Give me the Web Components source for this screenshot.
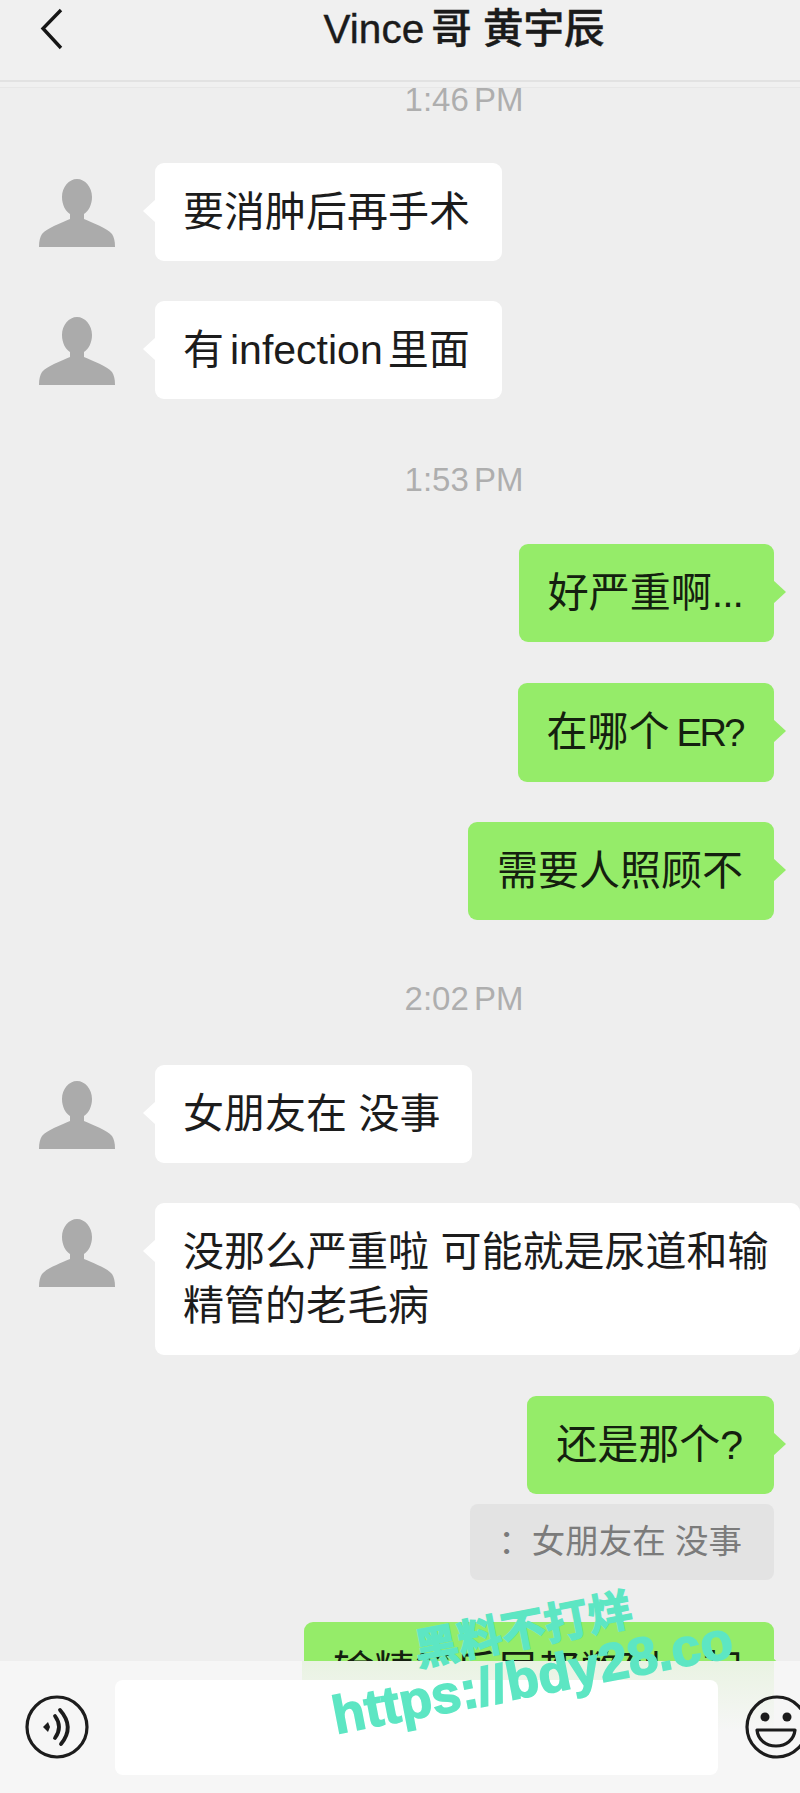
<!DOCTYPE html>
<html lang="zh">
<head>
<meta charset="utf-8">
<title>Vince 哥 黄宇辰</title>
<style>
    html, body {
        margin: 0;
        padding: 0;
    }

    body {
        position: relative;
        display: flex;
        flex-direction: column;
        width: 800px;
        height: 1793px;
        overflow: hidden;
        background: #eeeeee;
        font-family: "Liberation Sans", "Noto Sans CJK SC", sans-serif;
    }

    #chat {
        flex: 1;
        min-height: 0;
        overflow: hidden;
        background: linear-gradient(#f0f0f0 0 5px, #e7e7e7 5px 6px, #eeeeee 6px);
    }

    .narrow {
        font-size: 38px;
        letter-spacing: -2.5px;
        margin-left: 7px;
    }

    .dots {
        letter-spacing: -1px;
    }

    .latin {
        margin: 0 5px 0 6px;
    }
</style>
</head>
<body>
<chat-header>Vince<span style="margin-left:7px">哥</span> 黄宇辰</chat-header>

<main id="chat">
    <chat-time>1:46 PM</chat-time>
    <chat-bubble style="margin-top:45px">要消肿后再手术</chat-bubble>
    <chat-bubble style="margin-top:40px">有<span class="latin">infection</span>里面</chat-bubble>

    <chat-time style="margin-top:63px">1:53 PM</chat-time>
    <chat-bubble side="right" style="margin-top:46px">好严重啊<span class="dots">...</span></chat-bubble>
    <chat-bubble side="right" style="margin-top:41px">在哪个<span class="narrow">ER?</span></chat-bubble>
    <chat-bubble side="right" style="margin-top:40px">需要人照顾不</chat-bubble>

    <chat-time style="margin-top:61px">2:02 PM</chat-time>
    <chat-bubble style="margin-top:48px">女朋友在 没事</chat-bubble>
    <chat-bubble style="margin-top:40px">没那么严重啦 可能就是尿道和输<br>精管的老毛病</chat-bubble>

    <chat-bubble side="right" style="margin-top:41px">还是那个?</chat-bubble>
    <quote-bubble style="margin-top:10px">：女朋友在 没事</quote-bubble>
    <chat-bubble side="right" style="margin-top:42px">输精管后尿都憋到一起</chat-bubble>
</main>

<chat-input></chat-input>
<water-mark></water-mark>

<script>
const headerTemplate = document.createElement('template')
headerTemplate.innerHTML = `
    <style>
        :host {
            display: block;
            flex: none;
            height: 82px;
            overflow: hidden;
            background: #f0f0f0;
        }

        .bar {
            display: flex;
            align-items: center;
            height: 58px;
            padding-left: 40px;
            padding-bottom: 22px;
            border-bottom: 2px solid #e2e2e2;
        }

        svg {
            flex: none;
            display: block;
        }

        .title {
            flex: none;
            width: 800px;
            text-align: center;
            font-size: 40.500px;
            font-weight: 500;
            line-height: 58px;
            color: #1b1b1b;
            white-space: nowrap;
            -webkit-text-stroke: 0.4px #1b1b1b;
        }
    </style>
    <div class="bar">
        <svg width="24" height="44" viewBox="0 0 24 44">
            <path d="M21 3 L3 21.5 L21 41" fill="none" stroke="#161616" stroke-width="3.4"/>
        </svg>
        <div class="title"><slot></slot></div>
    </div>
`
class ChatHeader extends HTMLElement {
    constructor() {
        super();
        this.attachShadow({mode: 'open'})
        this.shadowRoot.appendChild(headerTemplate.content.cloneNode(true))
    }
}
window.customElements.define('chat-header', ChatHeader);

const timeTemplate = document.createElement('template')
timeTemplate.innerHTML = `
    <style>
        :host {
            display: block;
            padding-left: 128px;
            text-align: center;
            font-size: 33px;
            line-height: 36px;
            word-spacing: -4px;
            color: #aeaeae;
        }
    </style>
    <slot></slot>
`
class ChatTime extends HTMLElement {
    constructor() {
        super();
        this.attachShadow({mode: 'open'})
        this.shadowRoot.appendChild(timeTemplate.content.cloneNode(true))
    }
}
window.customElements.define('chat-time', ChatTime);

const avatarTemplate = document.createElement('template')
avatarTemplate.innerHTML = `
    <style>
        :host {
            display: block;
            flex: none;
            width: 76px;
            height: 68px;
            margin-top: 16px;
        }

        svg {
            display: block;
        }
    </style>
    <svg width="76" height="68" viewBox="0 0 76 68">
        <path fill="#ababab" d="M38 0 C46 0 53 8 53 18 C53 26 49.500 32 45 35 L45 40 C54 44 68 49 73 55 C75 58 76 62 76 68 L0 68 C0 62 1 58 3 55 C8 49 22 44 31 40 L31 35 C26.500 32 23 26 23 18 C23 8 30 0 38 0 Z"/>
    </svg>
`
class UserAvatar extends HTMLElement {
    constructor() {
        super();
        this.attachShadow({mode: 'open'})
        this.shadowRoot.appendChild(avatarTemplate.content.cloneNode(true))
    }
}
window.customElements.define('user-avatar', UserAvatar);

const bubbleTemplate = document.createElement('template')
bubbleTemplate.innerHTML = `
    <style>
        :host {
            display: flex;
            align-items: flex-start;
            padding-left: 39px;
        }

        :host([side="right"]) {
            justify-content: flex-end;
            padding-left: 0;
            padding-right: 26px;
        }

        .bubble {
            position: relative;
            flex: none;
            margin-left: 40px;
            padding: 22px 32px 22px 28px;
            border-radius: 9px;
            background: #ffffff;
            font-size: 41px;
            line-height: 54px;
            color: #1c1c1c;
            white-space: nowrap;
        }

        .bubble::before {
            content: '';
            position: absolute;
            top: 36px;
            left: -12px;
            width: 13px;
            height: 24px;
            background: inherit;
            clip-path: polygon(100% 0, 0 50%, 100% 100%);
        }

        :host([side="right"]) .bubble {
            margin-left: 0;
            padding: 22px 31px 22px 29px;
            background: #95ec69;
            color: #14200f;
        }

        :host([side="right"]) .bubble::before {
            left: auto;
            right: -12px;
            clip-path: polygon(0 0, 100% 50%, 0 100%);
        }

        :host([side="right"]) user-avatar {
            display: none;
        }
    </style>
    <user-avatar></user-avatar>
    <div class="bubble"><slot></slot></div>
`
class ChatBubble extends HTMLElement {
    constructor() {
        super();
        this.attachShadow({mode: 'open'})
        this.shadowRoot.appendChild(bubbleTemplate.content.cloneNode(true))
    }
}
window.customElements.define('chat-bubble', ChatBubble);

const quoteTemplate = document.createElement('template')
quoteTemplate.innerHTML = `
    <style>
        :host {
            display: flex;
            justify-content: flex-end;
            padding-right: 26px;
        }

        .quote {
            padding: 15px 32px 15px 28px;
            border-radius: 8px;
            background: #e3e3e3;
            font-size: 33.500px;
            line-height: 46px;
            color: #7b7b7b;
            white-space: nowrap;
        }
    </style>
    <div class="quote"><slot></slot></div>
`
class QuoteBubble extends HTMLElement {
    constructor() {
        super();
        this.attachShadow({mode: 'open'})
        this.shadowRoot.appendChild(quoteTemplate.content.cloneNode(true))
    }
}
window.customElements.define('quote-bubble', QuoteBubble);

const inputTemplate = document.createElement('template')
inputTemplate.innerHTML = `
    <style>
        :host {
            display: flex;
            flex: none;
            align-items: flex-start;
            box-sizing: border-box;
            height: 132px;
            padding: 19px 0 0 24px;
            overflow: hidden;
            background:
                linear-gradient(to bottom, #e9f3e2, rgba(246, 246, 246, 0) 70px) 302px 0 / 472px 100% no-repeat,
                #f6f6f6;
        }

        svg {
            flex: none;
            display: block;
            margin-top: 14px;
        }

        .field {
            flex: none;
            width: 603px;
            height: 95px;
            margin: 0 26px 0 25px;
            border-radius: 8px;
            background: #ffffff;
        }
    </style>
    <svg width="66" height="66" viewBox="0 0 66 66">
        <circle cx="33" cy="33" r="30" fill="none" stroke="#1c1c1c" stroke-width="3.2"/>
        <path d="M19 33 L24 28 L26 33 L24 38 Z" fill="#1c1c1c"/>
        <path d="M31 22 Q39 33 31 44" fill="none" stroke="#1c1c1c" stroke-width="3.8" stroke-linecap="round"/>
        <path d="M36 16 Q51 33 37 50" fill="none" stroke="#1c1c1c" stroke-width="3.8" stroke-linecap="round"/>
    </svg>
    <div class="field"></div>
    <svg width="66" height="66" viewBox="0 0 66 66">
        <circle cx="33" cy="33" r="30" fill="none" stroke="#1c1c1c" stroke-width="3.2"/>
        <circle cx="21" cy="23" r="4.500" fill="#1c1c1c"/>
        <circle cx="43" cy="23" r="4.500" fill="#1c1c1c"/>
        <path d="M13 36 L51 36 C50 46 42 52 32 52 C22 52 14 46 13 36 Z" fill="none" stroke="#1c1c1c" stroke-width="3.2" stroke-linejoin="round"/>
    </svg>
`
class ChatInput extends HTMLElement {
    constructor() {
        super();
        this.attachShadow({mode: 'open'})
        this.shadowRoot.appendChild(inputTemplate.content.cloneNode(true))
    }
}
window.customElements.define('chat-input', ChatInput);

// watermark stamped over the screenshot
const markTemplate = document.createElement('template')
markTemplate.innerHTML = `
    <style>
        :host {
            position: absolute;
            left: 278px;
            top: 1607px;
            width: 500px;
            transform: rotate(-11deg);
            text-align: center;
            font-weight: 700;
            color: #5de6c3;
            white-space: nowrap;
        }

        .cn {
            font-size: 44px;
            line-height: 46px;
            -webkit-text-stroke: 1.5px #5de6c3;
        }

        .url {
            font-size: 53px;
            line-height: 50px;
            -webkit-text-stroke: 1.5px #5de6c3;
        }
    </style>
    <div class="cn">黑料不打烊</div>
    <div class="url">https://bdy28.co</div>
`
class WaterMark extends HTMLElement {
    constructor() {
        super();
        this.attachShadow({mode: 'open'})
        this.shadowRoot.appendChild(markTemplate.content.cloneNode(true))
    }
}
window.customElements.define('water-mark', WaterMark);
</script>
</body>
</html>
